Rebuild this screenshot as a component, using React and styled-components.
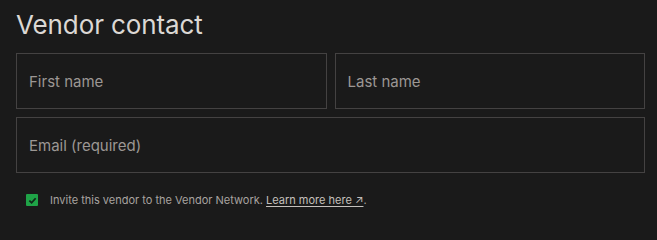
import React from 'react';
import styled, { createGlobalStyle } from 'styled-components';

const GlobalStyle = createGlobalStyle`
  html, body {
    margin: 0;
    background: #1a1a1a;
  }
  body {
    font-family: Inter, "Noto Sans", sans-serif;
  }
`;

const Panel = styled.form`
  padding: 8px 12px 0 16px;
  display: flex;
  flex-direction: column;
`;

const Title = styled.h2`
  margin: 0 0 12px;
  font-size: 26px;
  font-weight: 400;
  line-height: 33px;
  letter-spacing: -0.1px;
  color: #dcd8d4;
`;

const Row = styled.div`
  display: flex;
  gap: 8px;
  margin-bottom: 8px;
`;

const Field = styled.input`
  flex: 1;
  min-width: 0;
  box-sizing: border-box;
  height: 56px;
  padding: 0 12px;
  background: transparent;
  border: 1px solid #444242;
  border-radius: 0;
  font-family: Inter, "Noto Sans", sans-serif;
  font-size: 15px;
  color: #e6e2de;
  outline: none;

  &::placeholder {
    color: #9c9794;
  }
`;

const Consent = styled.label`
  display: flex;
  align-items: center;
  gap: 12px;
  margin-top: 12px;
  padding-left: 10px;
  font-size: 11px;
  color: #a8a3a0;
`;

const Box = styled.span`
  width: 12px;
  height: 12px;
  background: #1fa347;
  border-radius: 1px;
  display: flex;
  align-items: center;
  justify-content: center;
  flex-shrink: 0;
`;

const LearnLink = styled.a`
  color: #c4c0bc;
  text-decoration: underline;
  text-underline-offset: 2px;
`;

export default function App() {
  return (
    <>
      <GlobalStyle />
      <Panel>
        <Title>Vendor contact</Title>
        <Row>
          <Field placeholder="First name" />
          <Field placeholder="Last name" />
        </Row>
        <Row>
          <Field placeholder="Email (required)" />
        </Row>
        <Consent>
          <Box>
            <svg width="9" height="9" viewBox="0 0 10 10" fill="none">
              <path d="M1.5 5.2 L4 7.5 L8.5 2.5" stroke="#10261a" strokeWidth="2" />
            </svg>
          </Box>
          <span>
            Invite this vendor to the Vendor Network.{' '}
            <LearnLink href="#">Learn more here ↗</LearnLink>.
          </span>
        </Consent>
      </Panel>
    </>
  );
}
